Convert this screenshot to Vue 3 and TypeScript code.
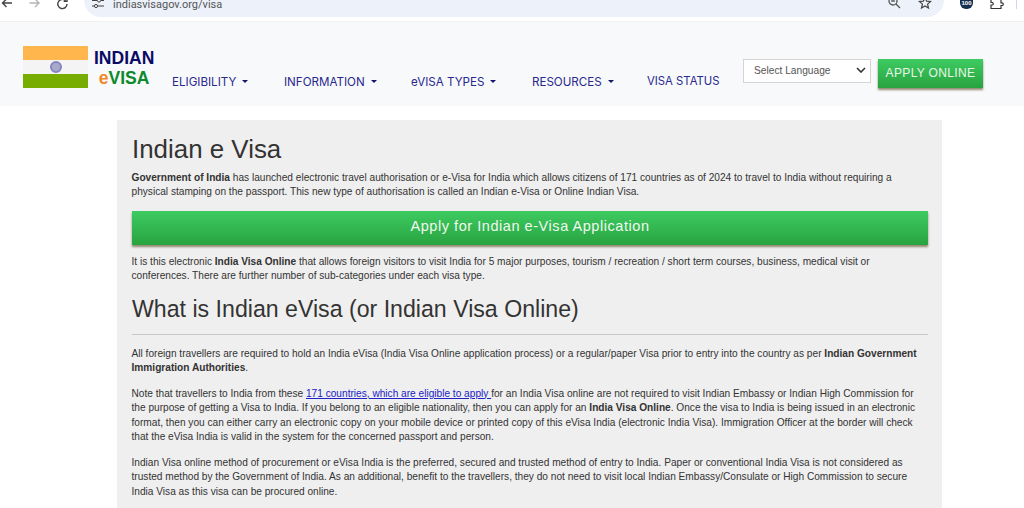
<script setup lang="ts">
const menus: { label: string; caret: boolean }[] = [
  { label: 'ELIGIBILITY', caret: true },
  { label: 'INFORMATION', caret: true },
  { label: 'eVISA TYPES', caret: true },
  { label: 'RESOURCES', caret: true },
  { label: 'VISA STATUS', caret: false },
]
</script>

<template>
  <div class="page">
    <div class="chrome">
      <div class="navicons">
        <svg width="14" height="14" viewBox="0 0 14 14" class="ic"><path d="M12 3H2.500M6.500 -1 2.500 3l4 4" fill="none" stroke="#444" stroke-width="1.400"/></svg>
        <svg width="14" height="14" viewBox="0 0 14 14" class="ic ic2"><path d="M1.500 3H11M7 -1l4 4-4 4" fill="none" stroke="#b5b5b5" stroke-width="1.400"/></svg>
        <svg width="14" height="14" viewBox="0 0 14 14" class="ic ic3"><path d="M11 4a4.600 4.600 0 1 1-1.400-3.300M11 -2v3.400H7.600" fill="none" stroke="#444" stroke-width="1.400"/></svg>
      </div>
      <div class="omnibox">
        <svg width="12" height="12" viewBox="0 0 12 12" class="tune"><path d="M0 0.500h5M9 0.500h3M0 6h2M6 6h6" stroke="#444" stroke-width="1.200"/><circle cx="7" cy="0.500" r="1.600" fill="none" stroke="#444"/><circle cx="4" cy="6" r="1.600" fill="none" stroke="#444"/></svg>
        <span class="url">indiasvisagov.org/visa</span>
        <svg width="14" height="14" viewBox="0 0 14 14" class="zoom"><circle cx="5" cy="1" r="4" fill="none" stroke="#555" stroke-width="1.300"/><path d="M8 4l4 4M3.200 1h3.600" stroke="#555" stroke-width="1.300"/></svg>
        <svg width="14" height="14" viewBox="0 0 14 14" class="star"><path d="M7-2.500 8.600 1.200l4 .3-3 2.600.9 3.900L7 6 3.500 8l.9-3.900-3-2.600 4-.3z" fill="none" stroke="#444" stroke-width="1.200"/></svg>
      </div>
      <div class="shield">100</div>
      <svg width="14" height="12" viewBox="0 0 14 12" class="puzzle"><path d="M1 0v3.500h1.500a1.400 1.400 0 0 1 0 2.500H1V9.500h10V6.500h1a1.300 1.300 0 0 0 0-2.600h-1V0" fill="none" stroke="#333" stroke-width="1.200"/></svg>
      <div class="tick"></div>
    </div>

    <header class="site-header">
      <div class="logo">
        <div class="flag">
          <div class="saffron"></div>
          <div class="white"><span class="chakra"></span></div>
          <div class="green"></div>
        </div>
        <div class="wordmark">
          <div class="w-indian">INDIAN</div>
          <div class="w-evisa"><span class="e">e</span><span class="v">VISA</span></div>
        </div>
      </div>
      <nav class="menu">
        <a v-for="m in menus" :key="m.label" class="menu-item" :class="{ plain: !m.caret }">
          {{ m.label }}<span v-if="m.caret" class="caret"></span>
        </a>
      </nav>
      <div class="actions">
        <div class="lang">
          <span>Select Language</span>
          <svg width="10" height="6" viewBox="0 0 10 6"><path d="M1 1l4 4 4-4" fill="none" stroke="#333" stroke-width="1.600"/></svg>
        </div>
        <a class="apply-online">APPLY ONLINE</a>
      </div>
    </header>

    <main class="card">
      <h1>Indian e Visa</h1>
      <p class="intro"><b>Government of India</b> has launched electronic travel authorisation or e-Visa for India which allows citizens of 171 countries as of 2024 to travel to India without requiring a physical stamping on the passport. This new type of authorisation is called an Indian e-Visa or Online Indian Visa.</p>
      <a class="apply-wide">Apply for Indian e-Visa Application</a>
      <p class="second">It is this electronic <b>India Visa Online</b> that allows foreign visitors to visit India for 5 major purposes, tourism / recreation / short term courses, business, medical visit or conferences. There are further number of sub-categories under each visa type.</p>
      <h2>What is Indian eVisa (or Indian Visa Online)</h2>
      <hr />
      <p class="p1">All foreign travellers are required to hold an India eVisa (India Visa Online application process) or a regular/paper Visa prior to entry into the country as per <b>Indian Government Immigration Authorities</b>.</p>
      <p class="p2">Note that travellers to India from these <a class="link">171 countries, which are eligible to apply </a>for an India Visa online are not required to visit Indian Embassy or Indian High Commission for the purpose of getting a Visa to India. If you belong to an eligible nationality, then you can apply for an <b>India Visa Online</b>. Once the visa to India is being issued in an electronic format, then you can either carry an electronic copy on your mobile device or printed copy of this eVisa India (electronic India Visa). Immigration Officer at the border will check that the eVisa India is valid in the system for the concerned passport and person.</p>
      <p class="p3">Indian Visa online method of procurement or eVisa India is the preferred, secured and trusted method of entry to India. Paper or conventional India Visa is not considered as trusted method by the Government of India. As an additional, benefit to the travellers, they do not need to visit local Indian Embassy/Consulate or High Commission to secure India Visa as this visa can be procured online.</p>
    </main>
  </div>
</template>

<style>
html, body { margin: 0; background: #fff; overflow: hidden; }
</style>

<style scoped>
.page { width: 1024px; height: 508px; overflow: hidden; font-family: "Liberation Sans", Arial, sans-serif; background: #fff; }

.chrome { height: 17px; display: flex; align-items: flex-start; background: #fff; position: relative; }
.navicons { width: 84px; height: 17px; position: relative; overflow: hidden; flex: none; }
.ic { position: absolute; left: 0; top: 0; }
.ic2 { left: 28px; }
.ic3 { left: 56px; }
.omnibox { width: 860px; height: 17px; background: #ecf1fa; border-radius: 0 0 17px 17px; display: flex; align-items: flex-start; overflow: hidden; flex: none; }
.tune { margin: 0 0 0 8px; flex: none; }
.url { font-family: Roboto, sans-serif; font-size: 11px; line-height: 9px; color: #555; margin-left: 9px; flex: 1; }
.zoom { margin-right: 16px; }
.star { margin-right: 12px; }
.shield { position: absolute; left: 960px; top: 0; width: 13px; height: 9px; background: #15304f; color: #fff; font: bold 6px/7px "Liberation Sans", sans-serif; text-align: center; border-radius: 0 0 6px 6px; }
.puzzle { position: absolute; left: 990px; top: -1px; }
.tick { position: absolute; left: 1016px; top: 0; width: 1px; height: 9px; background: #cfd8ea; }

.site-header { height: 84px; margin-top: 5px; background: #f8f9fa; display: flex; position: relative; box-shadow: 0 -1px 0 #f0f0f0; }
.logo { width: 144px; margin-left: 23px; padding-top: 24px; display: flex; flex: none; align-items: flex-start; }
.flag { width: 65px; height: 42px; display: flex; flex-direction: column; flex: none; }
.saffron { height: 14px; background: #ffb74d; }
.white { height: 14px; background: #f4f4f4; display: flex; align-items: center; justify-content: center; }
.green { height: 14px; background: #77ad00; }
.chakra { width: 8px; height: 8px; border: 2px solid #8585c4; border-radius: 50%; background: #a9a9c9; display: block; box-sizing: content-box; flex: none; }
.wordmark { margin-left: 6px; font-weight: bold; }
.w-indian { font-size: 17.500px; line-height: 20px; color: #0b0b66; margin-top: 2px; }
.w-evisa { font-size: 17.500px; line-height: 20px; text-align: center; }
.e { color: #ef8a2b; }
.v { color: #0c8a2c; }

.menu { display: flex; flex: none; align-items: flex-start; padding-top: 52px; margin-left: 5px; }
.menu-item { font-family: Inter, sans-serif; font-size: 11.600px; line-height: 17px; color: #28288f; display: flex; align-items: center; width: 112px; white-space: nowrap; }
.menu-item:nth-child(2) { width: 127px; }
.menu-item:nth-child(3) { width: 121px; }
.menu-item:nth-child(4) { width: 115px; }
.menu-item.plain { margin-top: -1px; width: auto; font-size: 11.300px; }
.caret { display: block; width: 0; height: 0; border-left: 3.500px solid transparent; border-right: 3.500px solid transparent; border-top: 3.500px solid #15156f; margin-left: 6px; margin-bottom: 2px; }

.actions { position: absolute; left: 743px; top: 37px; display: flex; align-items: flex-start; gap: 7px; }
.lang { width: 128px; height: 24px; box-sizing: border-box; border: 1px solid #d4d4d4; background: #fff; display: flex; align-items: center; justify-content: space-between; padding: 0 4px 2px 10px; font-size: 10.200px; color: #555; }
.apply-online { display: block; width: 105px; height: 29px; background: linear-gradient(#3ecb61, #28a33f); color: #e8f5e8; font-size: 12px; line-height: 28px; letter-spacing: 0.350px; text-align: center; box-shadow: 0 2px 2px rgba(90,80,40,.65); }

.card { width: 825px; margin: 14px 0 0 117px; background: #efefef; box-sizing: border-box; padding: 14px 14px 0 15px; height: 400px; color: #333; }
h1 { font-size: 25.900px; font-weight: normal; line-height: 30px; margin: 0 0 6.500px; color: #333; }
p { font-size: 10.150px; line-height: 14.500px; margin: 0 0 0 -0.500px; color: #333; }
.apply-wide { display: block; height: 34px; margin-top: 11.500px; background: linear-gradient(#3ecb61, #28a33f); color: #f0f8f0; font-size: 14.500px; line-height: 30px; letter-spacing: 0.550px; text-align: center; box-shadow: 0 2px 2px rgba(90,80,40,.65); }
.second { margin-top: 9.500px; }
h2 { font-size: 23.150px; font-weight: normal; line-height: 28px; margin: 11.500px 0 11px; color: #333; }
hr { border: 0; border-top: 1px solid #c8c8c8; margin: 0 0 11.500px; }
.p1 { margin-bottom: 11px; }
.p2 { margin-bottom: 11px; }
.link { color: #2020c8; text-decoration: underline; }
</style>
